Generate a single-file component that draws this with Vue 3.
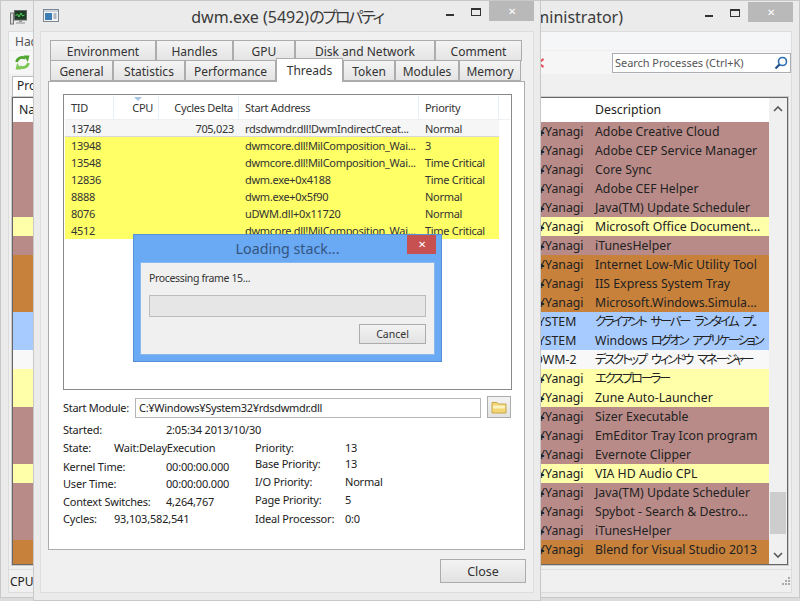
<script setup>
const frontTabsTop = [
  { label: 'Environment', width: 106 },
  { label: 'Handles', width: 77 },
  { label: 'GPU', width: 62 },
  { label: 'Disk and Network', width: 140 },
  { label: 'Comment', width: 87 },
];
const frontTabsBottom = [
  { label: 'General', width: 63 },
  { label: 'Statistics', width: 72 },
  { label: 'Performance', width: 91 },
  { label: 'Threads', width: 67, active: true },
  { label: 'Token', width: 52 },
  { label: 'Modules', width: 64 },
  { label: 'Memory', width: 62 },
];

const threads = [
  { tid: '13748', delta: '705,023', address: 'rdsdwmdr.dll!DwmIndirectCreat...', priority: 'Normal', selected: true },
  { tid: '13948', delta: '', address: 'dwmcore.dll!MilComposition_Wai...', priority: '3' },
  { tid: '13548', delta: '', address: 'dwmcore.dll!MilComposition_Wai...', priority: 'Time Critical' },
  { tid: '12836', delta: '', address: 'dwm.exe+0x4188', priority: 'Time Critical' },
  { tid: '8888', delta: '', address: 'dwm.exe+0x5f90', priority: 'Normal' },
  { tid: '8076', delta: '', address: 'uDWM.dll+0x11720', priority: 'Normal' },
  { tid: '4512', delta: '', address: 'dwmcore.dll!MilComposition_Wai...', priority: 'Time Critical' },
];

// gap = space above the line, the original dialog is not evenly spaced
const infoLeft = [
  { label: 'Started:', value: '2:05:34 2013/10/30', wide: true, gap: 0 },
  { label: 'State:', value: 'Wait:DelayExecution', gap: 1 },
  { label: 'Kernel Time:', value: '00:00:00.000', wide: true, gap: 2 },
  { label: 'User Time:', value: '00:00:00.000', wide: true, gap: 0 },
  { label: 'Context Switches:', value: '4,264,767', wide: true, gap: 1 },
  { label: 'Cycles:', value: '93,103,582,541', gap: 0 },
];
const infoRight = [
  { label: 'Priority:', value: '13', gap: 0 },
  { label: 'Base Priority:', value: '13', gap: -1 },
  { label: 'I/O Priority:', value: 'Normal', gap: 1 },
  { label: 'Page Priority:', value: '5', gap: 1 },
  { label: 'Ideal Processor:', value: '0:0', gap: 2 },
];

const processes = [
  { user: '¥Yanagi', desc: 'Adobe Creative Cloud', kind: 'brown' },
  { user: '¥Yanagi', desc: 'Adobe CEP Service Manager', kind: 'brown' },
  { user: '¥Yanagi', desc: 'Core Sync', kind: 'brown' },
  { user: '¥Yanagi', desc: 'Adobe CEF Helper', kind: 'brown' },
  { user: '¥Yanagi', desc: 'Java(TM) Update Scheduler', kind: 'brown' },
  { user: '¥Yanagi', desc: 'Microsoft Office Document...', kind: 'pale' },
  { user: '¥Yanagi', desc: 'iTunesHelper', kind: 'brown' },
  { user: '¥Yanagi', desc: 'Internet Low-Mic Utility Tool', kind: 'orange' },
  { user: '¥Yanagi', desc: 'IIS Express System Tray', kind: 'orange' },
  { user: '¥Yanagi', desc: 'Microsoft.Windows.Simula...', kind: 'orange' },
  { user: 'SYSTEM', desc: '', jp: 'クライアント サーバー ランタイム プ...', kind: 'blue' },
  { user: 'SYSTEM', desc: 'Windows ', jp: 'ログオン アプリケーション', kind: 'blue' },
  { user: 'DWM-2', desc: '', jp: 'デスクトップ ウィンドウ マネージャー', kind: 'white' },
  { user: '¥Yanagi', desc: '', jp: 'エクスプローラー', kind: 'pale' },
  { user: '¥Yanagi', desc: 'Zune Auto-Launcher', kind: 'pale' },
  { user: '¥Yanagi', desc: 'Sizer Executable', kind: 'brown' },
  { user: '¥Yanagi', desc: 'EmEditor Tray Icon program', kind: 'brown' },
  { user: '¥Yanagi', desc: 'Evernote Clipper', kind: 'brown' },
  { user: '¥Yanagi', desc: 'VIA HD Audio CPL', kind: 'pale' },
  { user: '¥Yanagi', desc: 'Java(TM) Update Scheduler', kind: 'brown' },
  { user: '¥Yanagi', desc: 'Spybot - Search & Destro...', kind: 'brown' },
  { user: '¥Yanagi', desc: 'iTunesHelper', kind: 'brown' },
  { user: '¥Yanagi', desc: 'Blend for Visual Studio 2013', kind: 'orange' },
  { user: '', desc: '', kind: 'orange' },
];
</script>

<template>
  <div class="desktop">
    <!-- main window, mostly hidden behind the properties window -->
    <section class="window back">
      <div class="titlebar back-title">
        <svg class="app-icon" viewBox="0 0 17 16" width="17" height="16">
          <rect x="0.5" y="4" width="3" height="11" fill="#d8d8d8" stroke="#777" />
          <rect x="4.5" y="1.5" width="12" height="9.5" fill="#1c3a24" stroke="#666" />
          <path d="M5.5 7l2-2 1.5 3 2-4 1.5 3 2-1" fill="none" stroke="#56d65c" />
          <rect x="9" y="11" width="3" height="2" fill="#999" />
          <rect x="6" y="13" width="9" height="2" fill="#bbb" />
        </svg>
        <span class="back-caption">Process Hacker (Administrator)</span>
        <div class="caption-buttons back-buttons">
          <span class="cap-min"></span>
          <span class="cap-max"></span>
          <span class="cap-close">✕</span>
        </div>
      </div>
      <div class="back-client">
        <div class="menubar">Hacker</div>
        <div class="toolbar">
          <svg class="refresh" viewBox="0 0 16 16" width="17" height="17">
            <g fill="none" stroke-width="2.600">
              <path d="M2.500 7.500C3 4 7 2 10.500 4" stroke="#4fa52f" />
              <path d="M13.500 8.500C13 12 9 14 5.500 12" stroke="#7cc652" />
            </g>
            <path d="M9 1.500L14.500 1.500 13 7.500z" fill="#4fa52f" />
            <path d="M7 14.500L1.500 14.500 3 8.500z" fill="#7cc652" />
          </svg>
          <span class="toolbar-spacer"></span>
          <svg class="red-x" viewBox="0 0 14 12" width="14" height="12">
            <path d="M2 1l5 4 5-4 1 2-4 3 4 3-1 2-5-4-5 4-1-2 4-3-4-3z" fill="#e8505a" />
          </svg>
          <div class="search">
            <span>Search Processes (Ctrl+K)</span>
            <svg viewBox="0 0 14 14" width="14" height="14">
              <circle cx="8.500" cy="5.500" r="4" fill="none" stroke="#2b6cb0" stroke-width="1.600" />
              <path d="M5.500 8.500L1.500 12.500" stroke="#1f4f8a" stroke-width="2.200" />
            </svg>
          </div>
        </div>
        <div class="back-tabs"><span class="back-tab">Processes</span></div>
        <div class="proc-list">
          <div class="proc-main">
            <div class="proc-header">
              <span class="proc-name">Name</span>
              <span class="proc-user"></span>
              <span class="proc-desc">Description</span>
            </div>
            <div class="proc-rows">
              <div v-for="(p, i) in processes" :key="i" class="proc-row" :class="'kind-' + p.kind">
                <span class="proc-name"></span>
                <span
                  class="proc-user"
                  :class="{ 'user-home': p.user === '¥Yanagi', 'user-dwm': p.user === 'DWM-2' }"
                >{{ p.user }}</span>
                <span class="proc-desc">{{ p.desc }}<span v-if="p.jp" class="jp">{{ p.jp }}</span></span>
              </div>
            </div>
          </div>
          <div class="scrollbar">
            <svg viewBox="0 0 10 6" width="10" height="6"><path d="M1 5l4-4 4 4" fill="none" stroke="#555" stroke-width="1.600" /></svg>
            <div class="scroll-track"><div class="scroll-thumb"></div></div>
            <svg viewBox="0 0 10 6" width="10" height="6"><path d="M1 1l4 4 4-4" fill="none" stroke="#555" stroke-width="1.600" /></svg>
          </div>
        </div>
        <div class="statusbar">
          <span>CPU Usage: 1.00%</span>
          <svg viewBox="0 0 8 8" width="8" height="8" fill="#aaa">
            <rect x="6" y="0" width="2" height="2" /><rect x="3" y="3" width="2" height="2" /><rect x="6" y="3" width="2" height="2" />
            <rect x="0" y="6" width="2" height="2" /><rect x="3" y="6" width="2" height="2" /><rect x="6" y="6" width="2" height="2" />
          </svg>
        </div>
      </div>
    </section>

    <!-- thread tab of the properties window -->
    <section class="window front">
      <div class="titlebar front-title">
        <svg class="app-icon" viewBox="0 0 16 13" width="16" height="13">
          <rect x="0.500" y="0.500" width="15" height="12" fill="#f4f4f4" stroke="#7b8794" />
          <rect x="1" y="1" width="14" height="2" fill="#c9d3dd" />
          <rect x="2" y="4" width="7" height="7" fill="#3b7db5" />
          <path d="M10.500 5h3M10.500 7h3M10.500 9h3" stroke="#6d7b88" />
        </svg>
        <span class="front-caption">dwm.exe (5492)<span class="jp">のプロパティ</span></span>
        <div class="caption-buttons">
          <span class="cap-min"></span>
          <span class="cap-max"></span>
          <span class="cap-close">✕</span>
        </div>
      </div>
      <div class="front-client">
        <div class="tab-row">
          <span v-for="t in frontTabsTop" :key="t.label" class="tab" :style="{ width: t.width + 'px' }">{{ t.label }}</span>
        </div>
        <div class="tab-row">
          <span
            v-for="t in frontTabsBottom"
            :key="t.label"
            class="tab"
            :class="{ active: t.active }"
            :style="{ width: t.width + 'px' }"
          >{{ t.label }}</span>
        </div>
        <div class="panel">
          <div class="threads">
            <div class="thread-grid thread-head">
              <span class="cell">TID</span>
              <span class="cell num cpu-head">CPU</span>
              <span class="cell num">Cycles Delta</span>
              <span class="cell">Start Address</span>
              <span class="cell">Priority</span>
              <span class="cell filler"></span>
            </div>
            <div
              v-for="t in threads"
              :key="t.tid"
              class="thread-grid thread-row"
              :class="{ selected: t.selected }"
            >
              <span class="cell">{{ t.tid }}</span>
              <span class="cell num"></span>
              <span class="cell num">{{ t.delta }}</span>
              <span class="cell">{{ t.address }}</span>
              <span class="cell">{{ t.priority }}</span>
            </div>
          </div>
          <div class="module-row">
            <label>Start Module:</label>
            <div class="module-input">C:¥Windows¥System32¥rdsdwmdr.dll</div>
            <button class="folder-btn">
              <svg viewBox="0 0 16 14" width="16" height="14">
                <path d="M1 2.500h5l1.500 1.500H15v9H1z" fill="#f4d774" stroke="#c6a74a" />
                <path d="M2 5.500h12v3H2z" fill="#fdf3c2" />
              </svg>
            </button>
          </div>
          <div class="info">
            <div class="info-left">
              <div v-for="r in infoLeft" :key="r.label" class="info-line" :style="{ marginTop: r.gap + 'px' }">
                <span class="info-label" :class="{ wide: r.wide }">{{ r.label }}</span>
                <span>{{ r.value }}</span>
              </div>
            </div>
            <div class="info-right">
              <div v-for="r in infoRight" :key="r.label" class="info-line" :style="{ marginTop: r.gap + 'px' }">
                <span class="info-label right">{{ r.label }}</span>
                <span>{{ r.value }}</span>
              </div>
            </div>
          </div>
        </div>
        <div class="close-row">
          <button class="btn close-btn">Close</button>
        </div>
      </div>
    </section>

    <!-- progress dialog on top -->
    <section class="dialog">
      <div class="dialog-title">
        <span>Loading stack...</span>
        <span class="dialog-close">✕</span>
      </div>
      <div class="dialog-client">
        <div class="dialog-text">Processing frame 15...</div>
        <div class="progress"></div>
        <div class="dialog-actions">
          <button class="btn cancel-btn">Cancel</button>
        </div>
      </div>
    </section>
  </div>
</template>

<style scoped>
.desktop {
  position: relative;
  width: 800px;
  height: 601px;
  overflow: hidden;
  font-family: "Noto Sans", "Noto Sans CJK JP", sans-serif;
  font-size: 11px;
  letter-spacing: -0.3px;
  color: #222;
  background: #dcdcdc;
}

.jp {
  font-feature-settings: "palt";
  letter-spacing: -2.200px;
  word-spacing: 4px;
}

.window {
  position: absolute;
  box-sizing: border-box;
  display: flex;
  flex-direction: column;
  background: #ebebeb;
  border: 1px solid #c8c8c8;
}

.titlebar {
  display: flex;
  align-items: flex-start;
  height: 30px;
  flex: none;
  position: relative;
}

.app-icon {
  margin: 8px 0 0 9px;
}

.caption-buttons {
  position: absolute;
  top: 0;
  right: 6px;
  display: flex;
  align-items: flex-start;
}

.back-buttons {
  top: 1px;
}

.cap-min {
  width: 8px;
  height: 2px;
  margin: 13px 17px 0 0;
  background: #333;
}

.cap-max {
  width: 8px;
  height: 5px;
  margin: 7px 8px 0 0;
  border: 1px solid #333;
  border-top-width: 2px;
}

.cap-close {
  width: 45px;
  height: 20px;
  background: #b9b9b9;
  color: #fff;
  font-size: 10px;
  letter-spacing: 0;
  line-height: 20px;
  text-align: center;
}

/* back window */
.back {
  left: 0;
  top: 0;
  width: 800px;
  height: 598px;
}

.back-caption {
  position: absolute;
  right: 176px;
  top: 5px;
  font-size: 16px;
  letter-spacing: 0;
  line-height: 22px;
  color: #3a3a3a;
}

.back-client {
  flex: 1;
  min-height: 0;
  display: flex;
  flex-direction: column;
  margin: 0 7px 4px 7px;
  background: #f0f0f0;
  border: 1px solid #dcdcdc;
}

.menubar {
  height: 18px;
  padding-left: 6px;
  font-size: 12px;
  letter-spacing: 0;
  line-height: 19px;
  background: #f5f6f7;
  color: #555;
}

.toolbar {
  height: 23px;
  display: flex;
  align-items: center;
  padding: 0 0 0 5px;
  background: #f6f6f6;
  border-top: 1px solid #eee;
}

.toolbar-spacer {
  flex: 1;
}

.red-x {
  margin-right: 67px;
}

.search {
  box-sizing: border-box;
  width: 179px;
  height: 20px;
  display: flex;
  align-items: center;
  justify-content: space-between;
  padding: 0 2px 0 2px;
  background: #fff;
  border: 1px solid #abadb3;
  font-size: 11px;
  letter-spacing: -0.05px;
  color: #555;
}

.back-tabs {
  height: 23px;
  display: flex;
  align-items: flex-end;
  padding-left: 3px;
}

.back-tab {
  height: 20px;
  padding: 0 4px;
  font-size: 12px;
  letter-spacing: 0;
  line-height: 18px;
  background: #fff;
  border: 1px solid #bbb;
  border-bottom: none;
}

.proc-list {
  flex: none;
  height: 468px;
  box-sizing: border-box;
  display: flex;
  margin: 0 3px;
  background: #fff;
  border: 1px solid #666;
  outline: 1px solid #ccc;
}

.proc-main {
  flex: 1;
  min-width: 0;
  min-height: 0;
  display: flex;
  flex-direction: column;
}

.proc-header {
  flex: none;
  height: 24px;
  display: flex;
  align-items: center;
  font-size: 12.300px;
  letter-spacing: 0;
  line-height: 24px;
  background: #fff;
}

.proc-rows {
  flex: 1;
  min-height: 0;
  overflow: hidden;
}

.proc-row {
  height: 19px;
  display: flex;
  font-size: 12.300px;
  letter-spacing: 0;
  line-height: 19px;
  color: #222;
}

.proc-name {
  width: 518px;
  flex: none;
  padding-left: 6px;
  box-sizing: border-box;
}

.proc-user {
  width: 63px;
  flex: none;
  box-sizing: border-box;
  white-space: nowrap;
}

.user-home {
  padding-left: 7px;
}

.user-dwm {
  padding-left: 3px;
}

.proc-desc {
  flex: 1;
  white-space: nowrap;
  padding-left: 1px;
  overflow: hidden;
}

.kind-brown { background: #b98b88; }
.kind-pale { background: #ffffaa; }
.kind-orange { background: #c8813b; }
.kind-blue { background: #a8cbff; }
.kind-white { background: #f8f8f8; }

.scrollbar {
  width: 18px;
  flex: none;
  display: flex;
  flex-direction: column;
  align-items: center;
  padding: 8px 0 6px;
  background: #f0f0f0;
  box-sizing: border-box;
}

.scroll-track {
  flex: 1;
  width: 100%;
  display: flex;
  flex-direction: column;
  justify-content: flex-end;
  padding: 0 1px 18px;
  box-sizing: border-box;
}

.scroll-thumb {
  height: 42px;
  background: #cdcdcd;
}

.statusbar {
  height: 22px;
  flex: none;
  display: flex;
  align-items: center;
  justify-content: space-between;
  margin-top: 4px;
  padding: 0 1px;
  border-top: 1px solid #ddd;
  font-size: 12px;
  letter-spacing: 0;
}

/* properties window */
.front {
  left: 33px;
  top: 0;
  width: 508px;
  height: 601px;
}

.front-caption {
  position: absolute;
  left: 0;
  right: 0;
  top: 5px;
  text-align: center;
  font-size: 16px;
  letter-spacing: 0;
  line-height: 22px;
  color: #3a3a3a;
}

.front-client {
  flex: 1;
  display: flex;
  flex-direction: column;
  margin: 0 6px 7px 6px;
  padding: 8px 8px 0 7px;
  background: #f0f0f0;
  border: 1px solid #dedede;
}

.tab-row {
  height: 20px;
  display: flex;
  padding-left: 2px;
  position: relative;
}

.tab {
  box-sizing: border-box;
  height: 21px;
  flex: none;
  text-align: center;
  font-size: 12px;
  letter-spacing: 0;
  line-height: 21px;
  background: linear-gradient(#f4f4f4, #e4e4e4);
  border: 1px solid #acacac;
  color: #333;
}

.tab.active {
  position: relative;
  z-index: 2;
  height: 24px;
  margin-top: -2px;
  line-height: 23px;
  background: #fff;
  border-bottom: none;
}

.panel {
  box-sizing: border-box;
  height: 469px;
  margin-top: 1px;
  padding: 12px 12px 0 14px;
  display: flex;
  flex-direction: column;
  background: #fff;
  border: 1px solid #acacac;
}

.threads {
  box-sizing: border-box;
  height: 296px;
  flex: none;
  padding: 1px;
  background: #fff;
  border: 1px solid #8a8a8a;
}

.thread-grid {
  display: grid;
  grid-template-columns: 49px 45px 80px 180px 80px 11px;
}

.thread-head {
  height: 24px;
  line-height: 23px;
  border-bottom: 1px solid #f0f0f0;
  box-sizing: border-box;
}

.thread-head .cell {
  border-right: 1px solid #e6eef6;
  position: relative;
}

.thread-head .filler {
  border-right: none;
}

.cell {
  box-sizing: border-box;
  padding: 0 5px 0 6px;
  white-space: nowrap;
  overflow: hidden;
  color: #333;
}

.num {
  text-align: right;
}

.cpu-head::before {
  content: "";
  position: absolute;
  left: 20px;
  top: 1px;
  border-left: 4px solid transparent;
  border-right: 4px solid transparent;
  border-top: 4px solid #a8c4e4;
}

.thread-row {
  height: 17px;
  line-height: 17px;
  background: #ffff66;
  width: 434px;
}

.thread-row.selected {
  background: #f6f6f6;
  border-bottom: 1px solid #d8d8d8;
  box-sizing: content-box;
  height: 16px;
}

.module-row {
  display: flex;
  align-items: center;
  height: 22px;
  margin-top: 6px;
  white-space: nowrap;
}

.module-row label {
  width: 72px;
  flex: none;
}

.module-input {
  box-sizing: border-box;
  width: 346px;
  height: 20px;
  margin-top: 2px;
  padding-left: 3px;
  line-height: 18px;
  background: #fff;
  border: 1px solid #b5b5b5;
}

.folder-btn {
  box-sizing: border-box;
  width: 24px;
  height: 22px;
  margin-left: 6px;
  padding: 0;
  display: flex;
  align-items: center;
  justify-content: center;
  background: linear-gradient(#f2f2f2, #e3e3e3);
  border: 1px solid #acacac;
}

.info {
  display: flex;
  margin-top: 3px;
  letter-spacing: -0.2px;
}

.info-left {
  width: 192px;
  flex: none;
}

.info-right {
  padding-top: 18px;
}

.info-line {
  height: 17px;
  display: flex;
  align-items: center;
  white-space: nowrap;
}

.info-label {
  width: 51px;
  flex: none;
}

.info-label.wide {
  width: 103px;
}

.info-label.right {
  width: 90px;
}

.close-row {
  display: flex;
  justify-content: flex-end;
  margin: 9px -1px 0 0;
}

.btn {
  box-sizing: border-box;
  padding: 0;
  font-family: inherit;
  color: #333;
  background: linear-gradient(#f3f3f3, #e2e2e2);
  border: 1px solid #acacac;
}

.close-btn {
  width: 86px;
  height: 24px;
  font-size: 12.500px;
}

/* loading dialog */
.dialog {
  position: absolute;
  left: 133px;
  top: 234px;
  width: 309px;
  height: 128px;
  box-sizing: border-box;
  display: flex;
  flex-direction: column;
  padding: 0 6px 6px;
  background: #6aa9f4;
  border: 1px solid #5590d8;
}

.dialog-title {
  height: 27px;
  flex: none;
  position: relative;
  text-align: center;
  font-size: 14.300px;
  letter-spacing: 0;
  line-height: 28px;
  color: #33557f;
}

.dialog-close {
  position: absolute;
  top: 0;
  right: -1px;
  width: 29px;
  height: 19px;
  background: #c75050;
  color: #fff;
  font-size: 10px;
  line-height: 19px;
}

.dialog-client {
  flex: 1;
  padding: 0 8px;
  background: #f0f0f0;
  border: 1px solid #8ab8f0;
}

.dialog-text {
  height: 32px;
  font-size: 10.500px;
  letter-spacing: -0.35px;
  line-height: 30px;
  color: #333;
}

.progress {
  box-sizing: border-box;
  height: 22px;
  background: #e6e6e6;
  border: 1px solid #bcbcbc;
}

.dialog-actions {
  display: flex;
  justify-content: flex-end;
  margin-top: 7px;
}

.cancel-btn {
  width: 67px;
  height: 20px;
  font-size: 10.500px;
}
</style>

<style>
html, body {
  margin: 0;
  background: #dcdcdc;
}
</style>
